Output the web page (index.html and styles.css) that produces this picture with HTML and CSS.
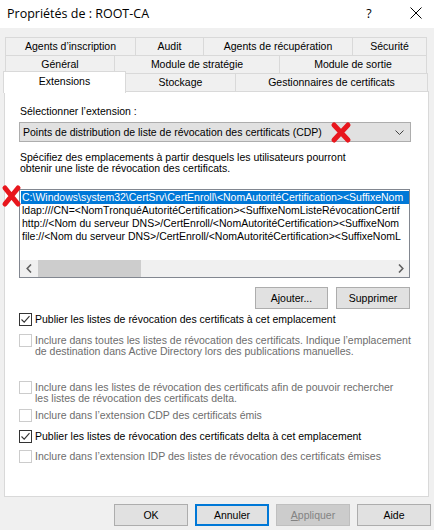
FILE: index.html
```html
<!DOCTYPE html>
<html lang="fr">
<head>
  <meta charset="UTF-8" />
  <title>Propriétés de : ROOT-CA</title>
  <link rel="stylesheet" href="styles.css">
</head>
<body>
  <div class="titlebar">
    <span class="title">Propriétés de : ROOT-CA</span>
    <span class="help">?</span>
    <svg class="close" width="12" height="12" viewBox="0 0 12 12"><path d="M0.5 0.5 L11.5 11.5 M11.5 0.5 L0.5 11.5" stroke="#000" stroke-width="1" fill="none"/></svg>
  </div>

  <div class="tabs">
    <div class="tab-row">
      <div class="tab w-inscr">Agents d’inscription</div>
      <div class="tab w-audit">Audit</div>
      <div class="tab w-recup">Agents de récupération</div>
      <div class="tab w-secu last">Sécurité</div>
    </div>
    <div class="tab-row">
      <div class="tab w-general">Général</div>
      <div class="tab w-strat">Module de stratégie</div>
      <div class="tab w-sortie last">Module de sortie</div>
    </div>
    <div class="tab-row front">
      <div class="tab active">Extensions</div>
      <div class="tab w-stock">Stockage</div>
      <div class="tab w-gest last">Gestionnaires de certificats</div>
    </div>
  </div>

  <div class="panel">
    <div class="field-label">Sélectionner l’extension :</div>
    <div class="combo">
      <span class="combo-text">Points de distribution de liste de révocation des certificats (CDP)</span>
      <svg class="chevron" width="9" height="5" viewBox="0 0 9 5"><path d="M0.5 0.5 L4.5 4.5 L8.5 0.5" stroke="#404040" stroke-width="1" fill="none"/></svg>
    </div>
    <p class="desc">Spécifiez des emplacements à partir desquels les utilisateurs pourront<br>obtenir une liste de révocation des certificats.</p>

    <div class="listbox">
      <ul class="items">
        <li class="selected">C:\Windows\system32\CertSrv\CertEnroll\&lt;NomAutoritéCertification&gt;&lt;SuffixeNom</li>
        <li>ldap:///CN=&lt;NomTronquéAutoritéCertification&gt;&lt;SuffixeNomListeRévocationCertif</li>
        <li>http://&lt;Nom du serveur DNS&gt;/CertEnroll/&lt;NomAutoritéCertification&gt;&lt;SuffixeNom</li>
        <li>file://&lt;Nom du serveur DNS&gt;/CertEnroll/&lt;NomAutoritéCertification&gt;&lt;SuffixeNomL</li>
      </ul>
      <div class="hscroll">
        <span class="arrow"><svg width="6" height="9" viewBox="0 0 6 9"><path d="M5 0.5 L1.2 4.5 L5 8.5" stroke="#606060" stroke-width="1.6" fill="none"/></svg></span>
        <div class="track"><div class="thumb"></div></div>
        <span class="arrow"><svg width="6" height="9" viewBox="0 0 6 9"><path d="M1 0.5 L4.8 4.5 L1 8.5" stroke="#606060" stroke-width="1.6" fill="none"/></svg></span>
      </div>
    </div>

    <div class="list-actions">
      <button class="btn w-add">Ajouter...</button>
      <button class="btn w-del">Supprimer</button>
    </div>

    <div class="options">
      <label class="check opt-1">
        <span class="box"><svg width="11" height="11" viewBox="0 0 11 11"><path d="M1.5 5.5 L4.2 8.2 L9.5 2.2" stroke="#333" stroke-width="1.1" fill="none"/></svg></span>
        <span class="check-text">Publier les listes de révocation des certificats à cet emplacement</span>
      </label>
      <label class="check disabled opt-2">
        <span class="box"></span>
        <span class="check-text">Inclure dans toutes les listes de révocation des certificats. Indique l’emplacement<br>de destination dans Active Directory lors des publications manuelles.</span>
      </label>
      <label class="check disabled opt-3">
        <span class="box"></span>
        <span class="check-text">Inclure dans les listes de révocation des certificats afin de pouvoir rechercher<br>les listes de révocation des certificats delta.</span>
      </label>
      <label class="check disabled opt-4">
        <span class="box"></span>
        <span class="check-text">Inclure dans l’extension CDP des certificats émis</span>
      </label>
      <label class="check opt-5">
        <span class="box"><svg width="11" height="11" viewBox="0 0 11 11"><path d="M1.5 5.5 L4.2 8.2 L9.5 2.2" stroke="#333" stroke-width="1.1" fill="none"/></svg></span>
        <span class="check-text">Publier les listes de révocation des certificats delta à cet emplacement</span>
      </label>
      <label class="check disabled opt-6">
        <span class="box"></span>
        <span class="check-text">Inclure dans l’extension IDP des listes de révocation des certificats émises</span>
      </label>
    </div>
  </div>

  <div class="dialog-buttons">
    <button class="btn w-foot">OK</button>
    <button class="btn w-foot default">Annuler</button>
    <button class="btn w-foot disabled"><u>A</u>ppliquer</button>
    <button class="btn w-foot">Aide</button>
  </div>

  <!-- red marks drawn over the screenshot -->
  <svg class="mark mark-combo" width="22" height="23" viewBox="0 0 22 23"><path d="M4 4 L18 19 M18 4 L4 19" stroke="#e8161d" stroke-width="5" stroke-linecap="round" fill="none"/></svg>
  <svg class="mark mark-list" width="21" height="24" viewBox="0 0 21 24"><path d="M4 4 L17 20 M17 4 L4 20" stroke="#e8161d" stroke-width="5" stroke-linecap="round" fill="none"/></svg>
</body>
</html>
```

FILE: styles.css
```css
* { box-sizing: border-box; }

body {
  margin: 0;
  width: 434px;
  height: 530px;
  overflow: hidden;
  position: relative;
  background: #f0f0f0;
  color: #000;
  font-family: 'Liberation Sans', Arial, sans-serif;
  font-size: 10.5px;
}

/* title bar */
.titlebar {
  height: 28px;
  background: #fff;
  display: flex;
  align-items: center;
  padding-left: 7px;
}

.title {
  flex: 1;
  font-family: 'Open Sans', sans-serif;
  font-size: 12.5px;
  margin-top: -2px;
}

.help {
  width: 14px;
  margin-right: 34px;
  text-align: center;
  font-family: 'Open Sans', sans-serif;
  font-size: 12.5px;
  margin-top: -2px;
}

.close {
  margin-right: 12px;
  margin-top: -2px;
}

/* tabs */
.tabs {
  margin-top: 9px;
}

.tab-row {
  display: flex;
  height: 18px;
  padding-left: 5px;
}

.tab {
  height: 18px;
  border-left: 1px solid #d9d9d9;
  border-top: 1px solid #d9d9d9;
  background: #f0f0f0;
  text-align: center;
  line-height: 17px;
  white-space: nowrap;
}

.tab.last { border-right: 1px solid #d9d9d9; }

.w-inscr { width: 130px; }
.w-audit { width: 68px; }
.w-recup { width: 149px; }
.w-secu { width: 75px; }
.w-general { width: 109px; }
.w-strat { width: 165px; }
.w-sortie { width: 148px; }
.w-stock { width: 110px; }
.w-gest { width: 193px; }

.tab-row.front { padding-left: 3px; }

.tab.active {
  position: relative;
  z-index: 2;
  width: 123px;
  height: 22px;
  margin-top: -2px;
  margin-right: -1px;
  background: #fff;
  border-right: 1px solid #d9d9d9;
  line-height: 19px;
}

/* page panel */
.panel {
  margin-left: 4px;
  width: 425px;
  height: 406px;
  background: #fff;
  border: 1px solid #d9d9d9;
  padding: 0 17px 0 14px;
}

.field-label {
  margin-top: 13px;
  line-height: 12px;
  padding-left: 1px;
}

.combo {
  margin-top: 5px;
  height: 20px;
  background: #e1e1e1;
  border: 1px solid #adadad;
  display: flex;
  align-items: center;
  padding: 0 3px 0 3px;
}

.combo-text {
  flex: 1;
  line-height: 18px;
  white-space: nowrap;
}

.chevron {
  margin-right: 3px;
}

.desc {
  margin: 10px 0 0 1px;
  line-height: 11px;
}

/* list of locations */
.listbox {
  margin-top: 15px;
  width: 391px;
  height: 89px;
  border: 1px solid #828790;
  background: #fff;
  display: flex;
  flex-direction: column;
}

.items {
  list-style: none;
  margin: 0;
  padding: 1px 0 0 1px;
  height: 70px;
  overflow: hidden;
}

.items li {
  height: 13px;
  line-height: 13px;
  padding-left: 1px;
  white-space: nowrap;
  overflow: hidden;
}

.items li.selected {
  background: #0078d7;
  color: #fff;
}

.hscroll {
  height: 17px;
  display: flex;
  background: #f0f0f0;
}

.arrow {
  width: 17px;
  display: flex;
  align-items: center;
  justify-content: center;
}

.track {
  flex: 1;
  display: flex;
  align-items: center;
}

.thumb {
  margin-left: 1px;
  width: 103px;
  height: 17px;
  background: #cdcdcd;
}

/* buttons */
.btn {
  height: 22px;
  padding: 0;
  background: #e1e1e1;
  border: 1px solid #adadad;
  font-family: inherit;
  font-size: inherit;
  color: #000;
}

.btn.default {
  border: 2px solid #0078d7;
}

.btn.disabled {
  background: #cccccc;
  border-color: #bfbfbf;
  color: #838383;
}

.list-actions {
  margin-top: 9px;
  display: flex;
  justify-content: flex-end;
  gap: 8px;
  padding-right: 1px;
}

.w-add { width: 73px; }
.w-del { width: 74px; }

/* checkboxes */
.options {
  display: flex;
  flex-direction: column;
}

.check {
  display: flex;
  align-items: flex-start;
  line-height: 11px;
  white-space: nowrap;
}

.box {
  width: 13px;
  height: 13px;
  border: 1px solid #333;
  background: #fff;
  margin-right: 3px;
  flex: none;
  display: flex;
  align-items: center;
  justify-content: center;
}

.check.disabled { color: #6d6d6d; }
.check.disabled .box { border-color: #cccccc; }

.opt-1 { margin-top: 4px; }
.opt-2 { margin-top: 8px; }
.opt-3 { margin-top: 24px; }
.opt-4 { margin-top: 5px; }
.opt-5 { margin-top: 8px; }
.opt-6 { margin-top: 7px; }

.check-text { padding-top: 1px; }

/* dialog buttons */
.dialog-buttons {
  margin-top: 7px;
  display: flex;
  gap: 7px;
  padding-left: 114px;
}

.w-foot { width: 74px; }

/* red annotation marks */
.mark {
  position: absolute;
}

.mark-combo { left: 330px; top: 121px; }
.mark-list { left: 1px; top: 184px; }
```
